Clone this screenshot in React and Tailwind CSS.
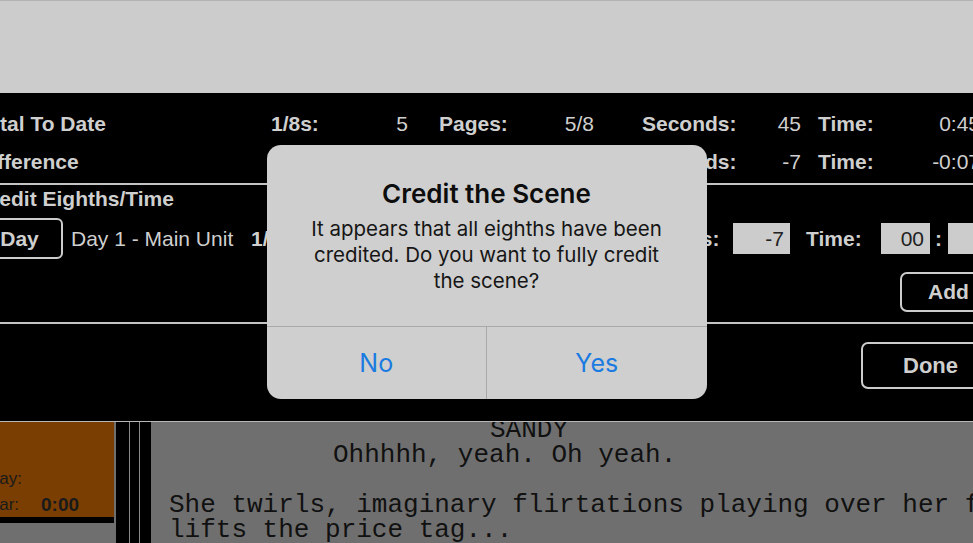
const Pair = ({ label, value, className = '' }) => (
  <div className={`flex shrink-0 justify-between ${className}`}>
    <span className="font-bold">{label}</span>
    <span>{value}</span>
  </div>
);

const Field = ({ value, className = '' }) => (
  <div
    className={`flex h-[31px] shrink-0 items-center justify-end bg-[#cccccc] pr-[6px] text-[21px] text-[#222] ${className}`}
  >
    {value}
  </div>
);

function CreditDialog() {
  return (
    <div className="absolute inset-0 flex items-center justify-center">
      <div className="flex h-[254px] w-[440px] flex-col overflow-hidden rounded-[14px] bg-[#cfcfcf] font-['Inter',sans-serif]">
        <div className="flex h-[182px] flex-col items-center border-b border-[#a9a9a9] pt-[32px] text-center">
          <div className="h-[33px] text-[26px] leading-[33px] font-semibold text-[#0d0d0d]">
            Credit the Scene
          </div>
          <p className="mt-[6px] text-[20.5px] leading-[26px] text-[#161616]">
            It appears that all eighths have been
            <br />
            credited. Do you want to fully credit
            <br />
            the scene?
          </p>
        </div>
        <div className="flex flex-1 text-[25px] text-[#1b7be0]">
          <button className="flex flex-1 items-center justify-center border-r border-[#a9a9a9] pt-[3px]">No</button>
          <button className="flex flex-1 items-center justify-center pt-[3px]">Yes</button>
        </div>
      </div>
    </div>
  );
}

export default function App() {
  return (
    <div className="relative h-[543px] w-[973px] overflow-hidden bg-[#cccccc] font-['Liberation_Sans',Arial,sans-serif]">
      <div className="h-[93px] border-t border-[#b3b3b3]" />

      <div className="h-[328px] overflow-hidden whitespace-nowrap bg-black text-[21px] text-[#cfcfcf]">
        <div className="flex h-[38px] items-center mt-[12px]">
          <span className="-ml-[24px] w-[295px] shrink-0 font-bold">Total To Date</span>
          <Pair label="1/8s:" value="5" className="w-[137px]" />
          <Pair label="Pages:" value="5/8" className="ml-[31px] w-[155px]" />
          <Pair label="Seconds:" value="45" className="ml-[48px] w-[159px]" />
          <Pair label="Time:" value="0:45" className="ml-[17px] w-[162px]" />
        </div>
        <div className="flex h-[38px] items-center">
          <span className="-ml-[24px] w-[295px] shrink-0 font-bold">Difference</span>
          <Pair label="1/8s:" value="0" className="w-[137px]" />
          <Pair label="Pages:" value="0" className="ml-[31px] w-[155px]" />
          <Pair label="Seconds:" value="-7" className="ml-[48px] w-[159px]" />
          <Pair label="Time:" value="-0:07" className="ml-[17px] w-[162px]" />
        </div>
        <div className="mt-[2px] h-[2px] bg-[#c4c4c4]" />

        <div className="flex h-[28px] items-center">
          <span className="-ml-[24px] font-bold">Credit Eighths/Time</span>
        </div>
        <div className="mt-[5px] flex h-[41px] items-center">
          <button className="-ml-[24px] flex h-[41px] w-[87px] shrink-0 items-center justify-center rounded-[6px] border-2 border-[#cccccc] font-bold">
            Day
          </button>
          <span className="ml-[8px] w-[180px] shrink-0">Day 1 - Main Unit</span>
          <div className="flex w-[374px] shrink-0 items-center">
            <span className="font-bold">1/8s:</span>
            <Field value="5" className="ml-[14px] w-[57px]" />
            <span className="ml-[20px] font-bold">Pages:</span>
            <Field value="5/8" className="ml-[14px] w-[57px]" />
          </div>
          <span className="w-[95px] shrink-0 font-bold">Seconds:</span>
          <Field value="-7" className="ml-[13px] w-[57px]" />
          <span className="ml-[16px] w-[55px] shrink-0 font-bold">Time:</span>
          <Field value="00" className="ml-[20px] w-[49px]" />
          <span className="ml-[5px] shrink-0 font-bold">:</span>
          <Field value="45" className="ml-[6px] w-[60px]" />
        </div>
        <div className="mt-[13px] flex h-[40px]">
          <button className="ml-[900px] flex h-[40px] w-[97px] shrink-0 items-center justify-center rounded-[7px] border-2 border-[#cccccc] font-bold">
            Add
          </button>
        </div>
        <div className="mt-[10px] h-[2px] bg-[#c4c4c4]" />
        <div className="mt-[18px] flex h-[47px]">
          <button className="ml-[861px] flex h-[47px] w-[139px] shrink-0 items-center justify-center rounded-[7px] border-2 border-[#cccccc] text-[22px] font-bold">
            Done
          </button>
        </div>
      </div>

      <div className="flex h-[122px] border-t border-[#b8b8b8] bg-[#6f6f6f]">
        <div className="flex w-[114px] shrink-0 flex-col">
          <div className="flex h-[95px] flex-col justify-end bg-[#7a3e02] pb-[-1px] text-[17px] text-[#1a1a1a]">
            <div className="-ml-[13px] mb-[1px] h-[26px] leading-[28px]">Day:</div>
            <div className="flex h-[26px] items-center leading-[26px] -mb-[1px]">
              <span className="-ml-[20px] w-[61px]">Year:</span>
              <span className="text-[19px] font-bold">0:00</span>
            </div>
          </div>
          <div className="h-[6px] bg-black" />
        </div>
        <div className="ml-[2px] flex shrink-0">
          <div className="w-[13px] bg-black" />
          <div className="w-px bg-[#8a8a8a]" />
          <div className="w-[9px] bg-black" />
          <div className="w-px bg-[#8a8a8a]" />
          <div className="w-[11px] bg-black" />
        </div>
        <div className="min-w-0 flex-1 overflow-hidden whitespace-pre font-['Liberation_Mono',monospace] text-[26px] leading-[25px] text-[#111]">
          <div className="-mt-[4px] pl-[339px]">SANDY</div>
          <div className="pl-[182px]">Ohhhhh, yeah. Oh yeah.</div>
          <div>&nbsp;</div>
          <div className="pl-[18px]">She twirls, imaginary flirtations playing over her face, and</div>
          <div className="pl-[18px]">lifts the price tag...</div>
        </div>
      </div>

      <CreditDialog />
    </div>
  );
}
